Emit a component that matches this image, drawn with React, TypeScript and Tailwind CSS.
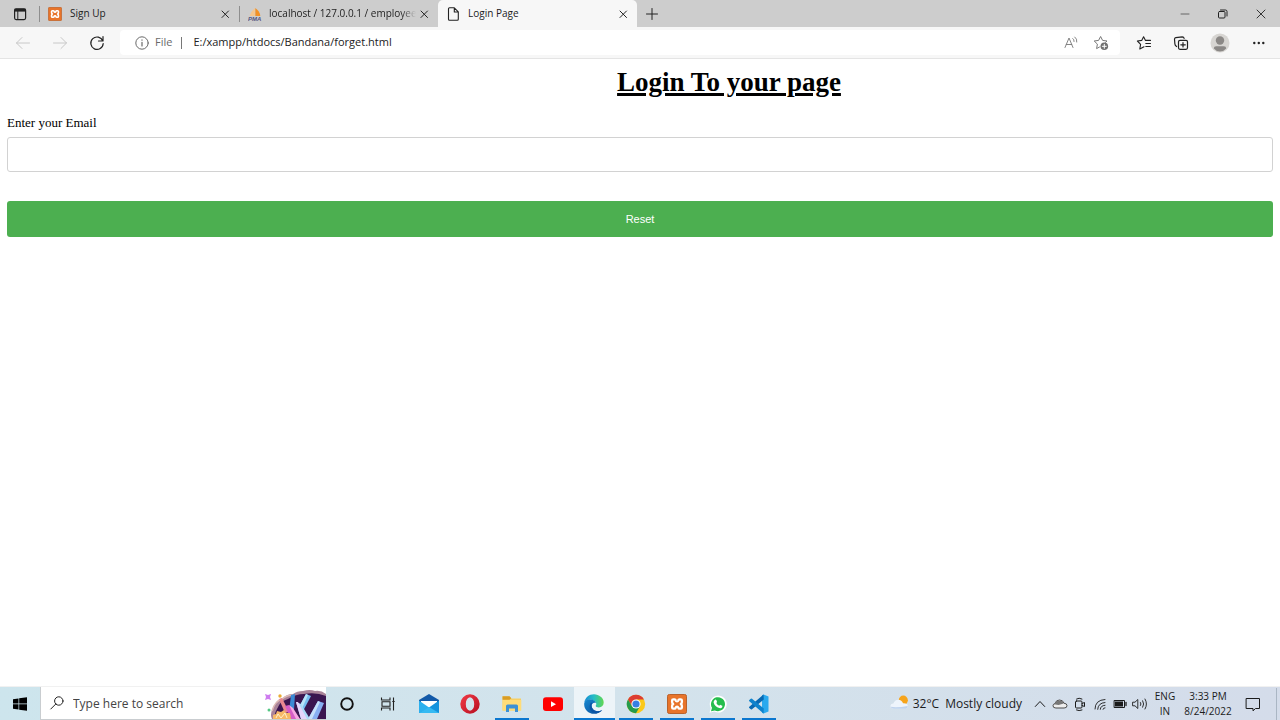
import type { ReactNode } from "react";

function XamppIcon({ className }: { className: string }) {
  return (
    <svg viewBox="0 0 20 20" className={className} aria-hidden="true">
      <rect x="0.5" y="0.5" width="19" height="19" rx="1.8" fill="#e8742a" stroke="#b9622c" />
      <path
        d="M6.300 5.300H7.500Q8.500 5.300 8.700 6.300 9 7.300 10 7.300t1.300-1Q11.500 5.300 12.500 5.300h1.200q1.200 0 1.200 1.200v1.500q0 1.300-1.100 2 1.100.7 1.100 2v1.500q0 1.200-1.200 1.200H12.500q-1 0-1.200-1-.3-1-1.300-1t-1.300 1q-.2 1-1.200 1H6.300q-1.200 0-1.200-1.200V12q0-1.300 1.100-2-1.100-.7-1.100-2V6.500q0-1.200 1.200-1.200Z"
        fill="#e8742a"
        stroke="#fff"
        strokeWidth="2.300"
        strokeLinejoin="round"
      />
    </svg>
  );
}

function Line({ className, children }: { className: string; children: ReactNode }) {
  return (
    <svg viewBox="0 0 16 16" className={className} fill="none" stroke="currentColor" strokeLinecap="round" strokeLinejoin="round" aria-hidden="true">
      {children}
    </svg>
  );
}

function CloseButton({ label }: { label: string }) {
  return (
    <button aria-label={label} className="flex size-4 shrink-0 items-center justify-center text-[#222]">
      <Line className="size-4">
        <path d="M5 5l6.500 6.500M11.500 5 5 11.500" strokeWidth="1" />
      </Line>
    </button>
  );
}

function TabBar() {
  return (
    <header className="flex h-[27px] items-center bg-[#cdcdcd] text-[10px] text-[#222]">
      <button aria-label="Tab actions" className="flex w-[39px] items-center justify-center">
        <Line className="size-4">
          <rect x="2.600" y="2.800" width="11" height="10.800" rx="1.500" strokeWidth="1.200" />
          <path d="M2.600 4.200h11" strokeWidth="2.800" strokeLinecap="butt" />
          <path d="M5.800 5v8.500" />
        </Line>
      </button>
      <div className="flex h-4 w-[200px] items-center border-l border-[#8e8e8e] pr-1.5 pl-2">
        <XamppIcon className="size-[14px] shrink-0" />
        <span className="ml-2 grow">Sign Up</span>
        <CloseButton label="Close Sign Up" />
      </div>
      <div className="flex h-4 w-[199px] items-center border-l border-[#8e8e8e] pr-1.5 pl-2">
        <svg viewBox="0 0 14 14" className="size-[14px] shrink-0" aria-hidden="true">
          <path d="M6.800 1Q2.500 5 1.500 9h5.300Z" fill="#f6c68d" />
          <path d="M7.300 1Q11.800 4 12.300 9h-5Z" fill="#f29125" />
          <text x="0" y="13.500" fontSize="6" fontWeight="bold" fontStyle="italic" fontFamily="Liberation Sans, sans-serif" fill="#55557f">PMA</text>
        </svg>
        <span className="ml-[7px] min-w-0 grow overflow-hidden mask-r-from-90% whitespace-nowrap">localhost / 127.0.0.1 / employee</span>
        <CloseButton label="Close localhost" />
      </div>
      <div className="flex h-full w-[199px] items-center rounded-t-[5px] bg-[#f7f7f7] pr-1.5 pl-2">
        <Line className="size-4 shrink-0">
          <path d="M3.500 1.800h4.800l4 4v7.400q0 1-1 1H3.500q-1 0-1-1V2.800q0-1 1-1ZM8.300 2v4h4" strokeWidth="1.100" />
        </Line>
        <span className="ml-1.5 grow">Login Page</span>
        <CloseButton label="Close Login Page" />
      </div>
      <button aria-label="New tab" className="flex w-[30px] items-center justify-center">
        <Line className="size-4">
          <path d="M8 2.500v11M2.500 8h11" />
        </Line>
      </button>
      <div className="ml-auto flex">
        <button aria-label="Minimize" className="flex w-[38px] justify-center">
          <Line className="size-4">
            <path d="M4 8h8" stroke="#666" />
          </Line>
        </button>
        <button aria-label="Restore" className="flex w-[38px] justify-center">
          <Line className="size-4">
            <rect x="3.500" y="5.500" width="6.500" height="6.500" rx="1" />
            <path d="M5.500 4h5q1.500 0 1.500 1.500V10" />
          </Line>
        </button>
        <button aria-label="Close window" className="flex w-[38px] justify-center">
          <Line className="size-4">
            <path d="M4 4l8 8M12 4l-8 8" strokeWidth="0.900" />
          </Line>
        </button>
      </div>
    </header>
  );
}

function Toolbar() {
  return (
    <nav className="flex h-8 items-center border-b border-[#e4e4e4] bg-[#f7f7f7] text-[#222]">
      <div className="flex w-[120px] items-center gap-[21px] pl-[15px]">
        <button aria-label="Back" className="text-[#c8c8c8]">
          <Line className="size-4">
            <path d="M14.500 8h-13M7 2.500 1.500 8 7 13.500" />
          </Line>
        </button>
        <button aria-label="Forward" className="text-[#c8c8c8]">
          <Line className="size-4">
            <path d="M1.500 8h13M9 2.500 14.500 8 9 13.500" />
          </Line>
        </button>
        <button aria-label="Refresh">
          <Line className="size-4">
            <path d="M13.800 6A6.200 6.200 0 1 0 14.200 8.500M14 1.500V6H9.500" strokeWidth="1.200" />
          </Line>
        </button>
      </div>
      <div className="flex h-[25px] grow items-center rounded bg-white pl-3.5">
        <Line className="size-4 text-[#6a6a6a]">
          <circle cx="8" cy="8" r="6.200" />
          <path d="M8 7.300v3.700M8 4.900v.3" strokeWidth="1.200" />
        </Line>
        <span className="ml-[5px] text-[11px] text-[#6a6a6a]">File</span>
        <span className="ml-[9px] h-3 w-px bg-[#777]" />
        <input aria-label="Address" defaultValue="E:/xampp/htdocs/Bandana/forget.html" className="ml-[11px] min-w-0 grow bg-transparent text-[11px] outline-none" />
        <div className="flex items-center gap-3.5 pr-[11px] text-[#777]">
          <button aria-label="Read aloud">
            <Line className="size-4">
              <path d="M2 12.500 6 3l4 9.500M3.300 9.500h5.400M9.800 3.500q1.500 1 1.300 3M11.800 2q2.500 1.800 2 5" strokeWidth="0.900" />
            </Line>
          </button>
          <button aria-label="Add to favorites">
            <Line className="size-4">
              <path d="M6.500 12 3.600 13.600l.8-4.500L1.200 6l4.400-.6L7.600 1.500l2 3.900L14 6l-1.500 1.400" />
              <circle cx="11.300" cy="11.300" r="3.800" fill="#707070" stroke="none" />
              <path d="M11.300 9.300v4M9.300 11.300h4" stroke="#fff" />
            </Line>
          </button>
        </div>
      </div>
      <div className="flex w-[160px] items-center gap-[21px] pl-4">
        <button aria-label="Favorites">
          <Line className="size-4">
            <path d="M8 11.800 3.800 14l.8-4.700L1.400 6l4.300-.6L7.600 1.700l1.900 3.700h5M9.800 8.500h4.700M9.800 11.500h4.700" strokeWidth="1.100" />
          </Line>
        </button>
        <button aria-label="Collections">
          <Line className="size-4">
            <rect x="5.500" y="5.300" width="9" height="9" rx="1.500" strokeWidth="1.200" />
            <path d="M10 7.500V12M7.800 9.800h4.500M3.600 11.500Q2 10.500 1.900 9L1.500 4.200q0-1.300 1.300-1.500l6.500-.9q1.500 0 1.800 1.500" strokeWidth="1.200" />
          </Line>
        </button>
        <button aria-label="Profile">
          <svg viewBox="0 0 20 20" className="size-5" aria-hidden="true">
            <circle cx="10" cy="10" r="9.500" fill="#d7d5d2" />
            <circle cx="10" cy="7.500" r="4.200" fill="#8b8886" />
            <path d="M3.800 15.500q0-2.300 2.400-2.300h7.600q2.400 0 2.400 2.300-2.500 3-6.200 3t-6.200-3Z" fill="#8b8886" />
          </svg>
        </button>
        <button aria-label="Settings and more">
          <svg viewBox="0 0 16 16" className="size-4" fill="currentColor" aria-hidden="true">
            <circle cx="3.300" cy="8" r="1.200" />
            <circle cx="7.800" cy="8" r="1.200" />
            <circle cx="12.300" cy="8" r="1.200" />
          </svg>
        </button>
      </div>
    </nav>
  );
}

function LoginForm() {
  return (
    <main className="grow px-[7px] font-['Liberation_Serif',serif] text-black">
      <h1 className="pt-[7px] pl-[178px] text-center text-[27px] leading-8 font-bold underline decoration-3">Login To your page</h1>
      <form className="pt-[17px]" onSubmit={(event) => event.preventDefault()}>
        <label htmlFor="email" className="block text-[13px] leading-4">Enter your Email</label>
        <input id="email" type="email" className="mt-1.5 block h-[35px] w-full rounded-[3px] border border-[#d2d2d2] px-4 text-[13px] outline-none" />
        <button type="submit" className="mt-[29px] block h-9 w-full rounded-[3px] bg-[#4caf50] font-['Liberation_Sans',sans-serif] text-[11px] text-white">
          Reset
        </button>
      </form>
    </main>
  );
}

function CrystalArt() {
  return (
    <svg viewBox="0 0 62 32" className="h-8 w-[62px] shrink-0" aria-hidden="true">
      <path d="M8 32q-2-4 0-9l4-7q2-4 7-5 4-4 10-4 4-3 10-3 7-2 12 0 6-1 11 3v25Z" fill="#a98399" />
      <path d="M11 32q-1-5 2-10 3-8 11-10 8-5 16-5 12-2 22 2v23Z" fill="#3a1550" />
      <path d="M8 24q3-10 10-12 5-4 11-4" fill="none" stroke="#dcb9b5" strokeWidth="1.500" />
      <path d="m15 12 3-1 7 14-4 1Z" fill="#e98791" />
      <path d="m27 8 4-1-1 16-5 2Z" fill="#3b8ad5" />
      <path d="m42 7 5 2-9 17-4-4Z" fill="#75bdf0" />
      <path d="m42 7 2 1-7 16-3-2Z" fill="#b8e3f8" />
      <path d="m21 19 4-1 11 14H27Z" fill="#d65cc7" />
      <path d="m25 18 4 3 7 11h-4Z" fill="#f7a7e2" />
      <path d="m32 15 5 2 9 15H37Z" fill="#a9daf7" />
      <path d="m32 15 2 0 9 17H37Z" fill="#e5d4fa" />
      <path d="m54 14 6 2-7 16h-9Z" fill="#88aff2" />
      <path d="m54 14 2 1-8 17h-4Z" fill="#c6e1fb" />
      <path d="M9 32v-4l3-1 1-3 4 1 3-2 2 3 4 0 1 6Z" fill="#f7b967" />
      <path d="m12 31 2-4 3 4 4-5 2 5" fill="none" stroke="#fff0cb" />
      <path d="m1 7 3 1 3-1-1 3 1 3-3-1-3 1 1-3Z" fill="#ce7cef" />
      <circle cx="16" cy="9" r="1.700" fill="#eaac34" />
      <circle cx="5" cy="23" r="1.500" fill="#53c783" />
    </svg>
  );
}

function AppButton({ label, running, active, children }: { label: string; running?: boolean; active?: boolean; children: ReactNode }) {
  return (
    <button aria-label={label} className={active ? "flex flex-col items-center bg-[#edf4f8]" : "flex flex-col items-center"}>
      <span className="flex grow items-center justify-center pt-0.5">{children}</span>
      <span className={running ? (active ? "h-0.5 w-full bg-[#0b77cf]" : "h-0.5 w-[34px] bg-[#0b77cf]") : "h-0.5"} />
    </button>
  );
}

function TaskbarApps() {
  return (
    <div className="grid w-[454px] grid-cols-11">
      <AppButton label="Cortana">
        <svg viewBox="0 0 20 20" className="size-5" fill="none" stroke="#111" strokeWidth="1.900"><circle cx="10" cy="10" r="5.800" /></svg>
      </AppButton>
      <AppButton label="Task view">
        <svg viewBox="0 0 20 20" className="size-5" fill="none" stroke="#222" strokeWidth="1.100">
          <path d="M3.500 3.500V6h8.500V3.500M3.500 16.500V14h8.500v2.500M4 7.800h8v4.400H4ZM15.500 3.500v13M14.300 7.500h2.400" />
        </svg>
      </AppButton>
      <AppButton label="Mail">
        <svg viewBox="0 0 20 20" className="size-5">
          <path d="M0 6 10 0l10 6v5H0Z" fill="#1259a8" />
          <path d="M2 7h16v8H2Z" fill="#fff" />
          <path d="m0 6.500 10 7-5 5.500H0Z" fill="#2cb0ee" />
          <path d="M20 6.500v12.500H0l10-5.500Z" fill="#1493dd" />
          <path d="m0 19 10-6 10 6Z" fill="#36baf2" />
        </svg>
      </AppButton>
      <AppButton label="Opera">
        <svg viewBox="0 0 20 20" className="size-5">
          <defs><linearGradient id="opera" x2="1" y2="1"><stop stopColor="#f33c47" /><stop offset="1" stopColor="#b50d20" /></linearGradient></defs>
          <path fillRule="evenodd" d="M10 .3a9.700 9.700 0 1 0 0 19.400A9.700 9.700 0 1 0 10 .3Zm0 3q4.200 1 4.200 6.700T10 16.700Q5.800 15.700 5.800 10T10 3.300Z" fill="url(#opera)" />
        </svg>
      </AppButton>
      <AppButton label="File Explorer" running>
        <svg viewBox="0 0 20 20" className="size-5">
          <path d="M.5 2.500h7l2 2H19v12H.5Z" fill="#f8cf62" />
          <path d="M.5 2.300h7l1.800 2-1.800 1.500h-7Z" fill="#d99d25" />
          <path d="M.5 6h18.800v10.500H.5Z" fill="#ffdc78" />
          <path d="M4 18v-6q0-1.500 1.500-1.500h9Q16 10.500 16 12v6h-3v-3.500H7V18Z" fill="#3c91d6" />
        </svg>
      </AppButton>
      <AppButton label="YouTube">
        <svg viewBox="0 0 20 20" className="size-5">
          <rect y="3.300" width="20" height="13.700" rx="3" fill="#f00" />
          <path d="m8 7.300 5 2.900-5 2.900Z" fill="#fff" />
        </svg>
      </AppButton>
      <AppButton label="Microsoft Edge" running active>
        <svg viewBox="0 0 20 20" className="size-5">
          <defs>
            <linearGradient id="edgeTop" x2="1"><stop stopColor="#168bd4" /><stop offset=".5" stopColor="#26bec5" /><stop offset="1" stopColor="#62d84e" /></linearGradient>
            <linearGradient id="edgeBase" x2="1" y2="1"><stop stopColor="#1688d0" /><stop offset="1" stopColor="#0a4b99" /></linearGradient>
          </defs>
          <path d="M.3 8.500C1 3.500 5 .2 10 .2s9.700 3.600 9.700 8.300c0 3-2 4.900-4.800 4.900-2 0-3.200-.8-3.200-1.500 0-.4.600-.8.600-1.900C12.300 7.800 9 5.500 5.800 5.500 3.300 5.500 1.300 6.500.3 8.500Z" fill="url(#edgeTop)" />
          <path d="M.2 9.300C.8 6.700 3 5.300 5.500 5.300c3.100 0 5.800 1.700 6.600 3.700C9.500 8 7.700 9.500 7.700 11.800c0 3 2.800 5.500 6.100 5.500 1.500 0 2.900-.4 4.300-1.300C16.200 18.300 13.300 19.800 10 19.800 4 19.800-.3 15 .2 9.300Z" fill="url(#edgeBase)" />
          <path d="M7 8.800c-1.800 2-2 6.500 1.200 9.300 1.500 1.300 3.500 1.500 5 1.100 2-.6 3.800-1.600 5-3.300-3 1.700-6.500 1.700-8.700-.2C7.300 13.800 6.800 10.700 8.300 9Z" fill="#0b55a5" />
        </svg>
      </AppButton>
      <AppButton label="Google Chrome" running>
        <svg viewBox="0 0 20 20" className="size-5">
          <circle cx="10" cy="10" r="9.200" fill="#fbc919" />
          <path d="M2 5.400A9.200 9.200 0 0 1 18 5.400H10L6 12.300Z" fill="#dd3d32" />
          <path d="M2 5.400A9.200 9.200 0 0 0 10 19.200L14 12.300 6 12.300Z" fill="#249b4b" />
          <circle cx="10" cy="10" r="4.600" fill="#fff" />
          <circle cx="10" cy="10" r="3.600" fill="#367fe3" />
        </svg>
      </AppButton>
      <AppButton label="XAMPP" running><XamppIcon className="size-5" /></AppButton>
      <AppButton label="WhatsApp" running>
        <svg viewBox="0 0 20 20" className="size-5">
          <path d="m1.500 18.700 1.300-4.500a8.500 8.500 0 1 1 3.500 3.400Z" fill="#fff" />
          <path d="m3 17.300 1-3.500a7 7 0 1 1 2.800 2.600Z" fill="#25bd4d" />
          <path d="M6.500 6.200Q7.500 5 8.300 6l.7 1.700q.2.500-.7 1.300 1 2 3 2.800.8-1.100 1.200-.9l1.800.9q.3.300-.2 1.400-.8 1.300-2.800.8-4.500-1.300-5.700-5.600Q5.600 7.200 6.500 6.200Z" fill="#fff" />
        </svg>
      </AppButton>
      <AppButton label="Visual Studio Code" running>
        <svg viewBox="0 0 20 20" className="size-5">
          <path d="m14.500.4 5 2.200v14.800l-5 2.200-1.500-.8V1.200Z" fill="#2aa9ee" />
          <path d="m14.500.4.300 5.100L3 15.300q-.6.500-1.200 0L.3 14q-.6-.6 0-1.200Z" fill="#0869b3" />
          <path d="m14.500 19.600.3-5.100L3 4.700q-.6-.5-1.200 0L.3 6q-.6.600 0 1.200Z" fill="#0e82cc" />
        </svg>
      </AppButton>
    </div>
  );
}

function SystemTray() {
  return (
    <div className="ml-auto flex items-center text-[#1b1b1b]">
      <button className="flex items-center text-[12px] whitespace-nowrap">
        <svg viewBox="0 0 20 20" className="mr-1 size-[19px]" aria-hidden="true">
          <circle cx="14" cy="6.500" r="4.800" fill="#f6a41c" />
          <path d="M4 15.500q-3.500 0-3.500-2.800 0-2.500 3-2.700Q5 6 8.700 6q3.700 0 5 3.800 5-.3 5 3 0 2.700-3.300 2.700Z" fill="#eef4fc" />
          <path d="M4 15.500q-2.500 0-3.500-2.000 8 1 18.100-1 0 3-3.200 3Z" fill="#bfd3ee" />
        </svg>
        <span>32°C</span>
        <span className="ml-1.5">Mostly cloudy</span>
      </button>
      <div className="ml-2.5 flex items-center gap-1">
        <button aria-label="Show hidden icons"><Line className="size-4"><path d="M3.300 10.500 8 5.500l4.700 5" /></Line></button>
        <button aria-label="OneDrive">
          <Line className="size-4">
            <path d="M3.500 12Q1 12 1 9.800 1 8 3 7.500 4 4 7.500 4 11 4 12 7.200q3 .2 3 2.500 0 2.300-2.500 2.300Z" fill="#eee" stroke="#4b4b4b" />
            <path d="M2 8.300Q4 4.500 7.500 4.500q3 0 4.300 3L6.500 9Z" fill="#777" stroke="none" />
          </Line>
        </button>
        <button aria-label="Meet now">
          <Line className="size-4"><rect x="3.500" y="5" width="6.500" height="7" rx="1" /><path d="m10 7.500 2.500-1v4l-2.500-1M4.500 3q2.500-1.700 5.500 0M4.500 14q2.500 1.300 5.500 0" /></Line>
        </button>
        <button aria-label="Network">
          <Line className="size-4"><path d="M3 13Q3 4 13 3.500M5.700 13.300Q6 7 13 6.500M8.300 13.300Q8.500 9.500 13 9.300M11 13.300q.2-1.500 2-1.500" strokeWidth="0.900" /></Line>
        </button>
        <button aria-label="Battery">
          <Line className="size-4"><rect x="2.500" y="4.500" width="10" height="7" /><path d="M14 6.500v3" strokeWidth="1.300" /><path d="M3 5.500h8v5H3Z" fill="currentColor" stroke="none" /></Line>
        </button>
        <button aria-label="Volume">
          <Line className="size-4"><path d="M1 6.200h2l2.800-2.700v9L3 9.800H1ZM8.500 6.500q1 1.500 0 3M10.700 4.800q2 3.200 0 6.400M13 3q3 5 0 10" strokeWidth="0.900" /></Line>
        </button>
      </div>
      <button className="w-[34px] text-center text-[10px] leading-[15px]">ENG<br />IN</button>
      <button className="w-[52px] text-center text-[10px] leading-[15px] whitespace-nowrap">3:33 PM<br />8/24/2022</button>
      <button aria-label="Notifications" className="mr-[15px] ml-[11px]">
        <Line className="size-4"><path d="M1.500 2.500h13v10h-4L8 14.800V12.500H1.500Z" /></Line>
      </button>
      <span className="mr-[3px] h-8 w-px bg-[#aab6c4]" />
    </div>
  );
}

function Taskbar() {
  return (
    <footer className="flex h-[34px] border-t border-[#f1f1f1] bg-linear-to-r from-[#cde5ed] via-[#d3e3ec] to-[#d4dcea]">
      <button aria-label="Start" className="flex w-10 items-center justify-center">
        <svg viewBox="0 0 16 16" className="size-4" aria-hidden="true">
          <path d="M1 3.200 6.500 2.400v5.200H1ZM7.200 2.300 15 1.200v6.400H7.200ZM1 8.300h5.500v5.300L1 12.800ZM7.200 8.300H15v6.500l-7.800-1.100Z" fill="#000" />
        </svg>
      </button>
      <div className="flex w-[286px] items-center border-b border-l border-[#c9cdd0] bg-white pl-2">
        <Line className="size-4 shrink-0 text-[#222]"><circle cx="9.800" cy="6" r="4.200" /><path d="m6.800 9-5 5" /></Line>
        <input type="search" aria-label="Type here to search" placeholder="Type here to search" className="ml-2 min-w-0 grow pt-px text-[12px] outline-none placeholder:text-[#444]" />
        <CrystalArt />
      </div>
      <TaskbarApps />
      <SystemTray />
    </footer>
  );
}

export default function App() {
  return (
    <div className="flex min-h-screen flex-col bg-white font-['Open_Sans','Noto_Sans',sans-serif]">
      <TabBar />
      <Toolbar />
      <LoginForm />
      <Taskbar />
    </div>
  );
}
